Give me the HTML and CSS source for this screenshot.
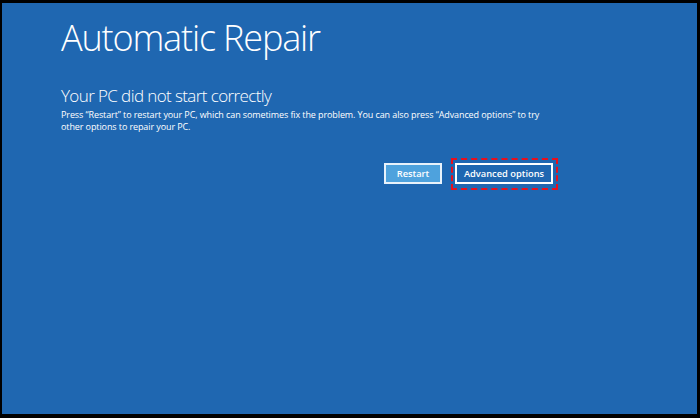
FILE: index.html
```html
<!DOCTYPE html>
<html>
<head>
<meta charset="utf-8">
<link rel="stylesheet" href="styles.css">
</head>
<body>
<div class="screen">
  <div class="content">
    <h1 class="title">Automatic Repair</h1>
    <h2 class="subtitle">Your PC did not start correctly</h2>
    <p class="desc">Press “Restart” to restart your PC, which can sometimes fix the problem. You can also press “Advanced options” to try other options to repair your PC.</p>
    <div class="actions">
      <button class="btn btn-restart">Restart</button>
      <div class="highlight">
        <button class="btn btn-advanced">Advanced options</button>
      </div>
    </div>
  </div>
</div>
</body>
</html>
```
FILE: styles.css
```css
html, body {
  margin: 0;
  padding: 0;
  background: #000;
  width: 700px;
  height: 418px;
  overflow: hidden;
}
.screen {
  margin: 3px 3px 0 2px;
  height: 411px;
  background: #1f67b1;
  color: #fff;
  font-family: "Open Sans", "Noto Sans", sans-serif;
  box-sizing: border-box;
  padding: 13px 0 0 59px;
}
.content {
  width: 497px;
}
.title {
  margin: 0;
  font-weight: 300;
  font-size: 36px;
  line-height: 44px;
  letter-spacing: -1.15px;
}
.subtitle {
  margin: 26px 0 0 0;
  font-weight: 300;
  font-size: 17px;
  line-height: 20px;
  letter-spacing: -0.6px;
}
.desc {
  margin: 3px 0 0 0;
  font-size: 9px;
  line-height: 12px;
  letter-spacing: -0.1px;
}
.actions {
  display: flex;
  justify-content: flex-end;
  align-items: flex-start;
  margin-top: 25px;
  gap: 9px;
}
.btn {
  font-family: "Open Sans", "Noto Sans", sans-serif;
  font-weight: 600;
  font-size: 9.3px;
  color: #fff;
  border: 2px solid #fff;
  height: 21px;
  padding: 0;
  box-sizing: border-box;
}
.btn-restart {
  margin-top: 5px;
  background: #4ea2dd;
  border-color: #e8f2fb;
  width: 58px;
}
.btn-advanced {
  background: #1f67b1;
  width: 98px;
  display: block;
}
.highlight {
  border: 2px dashed #e8101c;
  padding: 3px 3px 4px 2px;
}
```
